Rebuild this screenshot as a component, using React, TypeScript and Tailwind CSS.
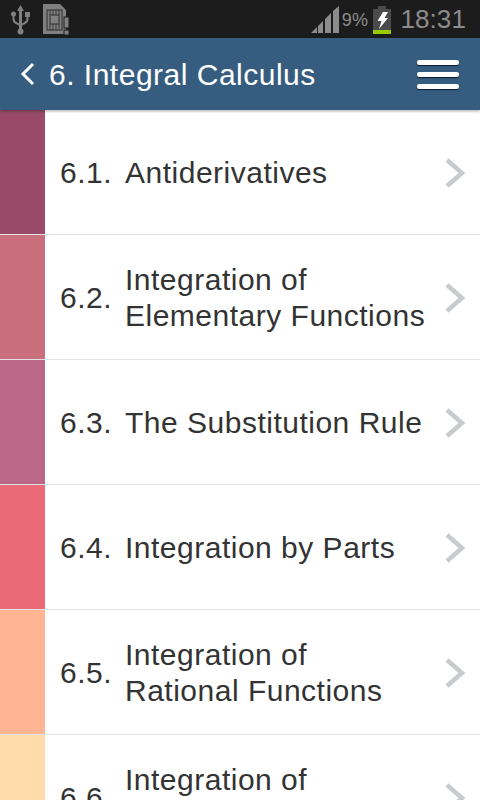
const sections = [
  { num: '6.1.', lines: ['Antiderivatives'], color: 'bg-[#9a4a68]' },
  { num: '6.2.', lines: ['Integration of', 'Elementary Functions'], color: 'bg-[#c96e7c]' },
  { num: '6.3.', lines: ['The Substitution Rule'], color: 'bg-[#bb6787]' },
  { num: '6.4.', lines: ['Integration by Parts'], color: 'bg-[#ea6a78]' },
  { num: '6.5.', lines: ['Integration of', 'Rational Functions'], color: 'bg-[#ffb592]' },
  { num: '6.6.', lines: ['Integration of', '\u00a0'], color: 'bg-[#ffdcaa]' },
]

function StatusBar() {
  return (
    <div className="h-[38px] bg-[#1c1c1c] flex items-center justify-between pl-[11px] pr-[14px] shrink-0">
      <div className="flex items-center gap-[13px]">
        {/* usb */}
        <svg width="19" height="31" viewBox="0 0 19 31" fill="none">
          <path d="M9.5 1 L13 7 H11 V25 H8 V7 H6 Z" fill="#808080" />
          <circle cx="9.5" cy="27.5" r="3" fill="#808080" />
          <path d="M2.5 11 V15 Q2.5 18 6 19.5 L9.5 21.5 L13 19.5 Q16.5 18 16.5 15 V11" stroke="#808080" strokeWidth="2" />
          <circle cx="2.5" cy="10" r="2.5" fill="#808080" />
          <rect x="14" y="8" width="5" height="5" fill="#808080" />
        </svg>
        {/* sd card warning */}
        <svg width="27" height="31" viewBox="0 0 27 31">
          <path d="M0 0 H17 L23 6 V30 H0 Z" fill="#808080" />
          <rect x="4" y="6" width="15" height="20" fill="none" stroke="#3a3a3a" strokeWidth="1.2" />
          <rect x="7" y="11" width="9" height="9" fill="none" stroke="#3a3a3a" strokeWidth="1.2" />
          <path d="M7 6 V11 M10 6 V11 M13 6 V11 M16 6 V11 M7 20 V26 M10 20 V26 M13 20 V26 M16 20 V26" stroke="#3a3a3a" strokeWidth="1" />
          <rect x="21" y="13" width="5" height="11" fill="#808080" stroke="#1c1c1c" />
          <rect x="21" y="26" width="5" height="5" fill="#808080" stroke="#1c1c1c" />
        </svg>
      </div>
      <div className="flex items-center">
        <svg width="29" height="28" viewBox="0 0 29 28" className="mt-[1px]">
          <path d="M0 27 L6 21 V27 Z M7 20 L12 15 V27 H7 Z M14 13 L20 7 V27 H14 Z M22 5 L28 0 V27 H22 Z" fill="#8c8c8c" />
        </svg>
        <span className="ml-[2px] mt-[1px] text-[18px] leading-none text-[#8c8c8c] font-['Liberation_Sans',sans-serif] tracking-[0.3px]">9%</span>
        <svg width="18" height="28" viewBox="0 0 18 28" className="ml-[5px] mt-[1px]">
          <rect x="5" y="0" width="8" height="3" fill="#4a4a4a" />
          <rect x="0" y="3" width="18" height="21" fill="#4a4a4a" />
          <rect x="0" y="24" width="18" height="4" fill="#99cc00" />
          <path d="M10 6 H15 L11.5 12 H15 L6 23 L8.5 15 H4.5 Z" fill="#ffffff" />
        </svg>
        <span className="ml-[9px] text-[26px] leading-none text-[#8c8c8c] font-['Liberation_Sans',sans-serif] tracking-[0.1px]">18:31</span>
      </div>
    </div>
  )
}

function Header() {
  return (
    <div className="relative z-10 h-[72px] bg-[#365d80] shadow-[0_1px_3px_rgba(0,0,0,0.35)] flex items-center justify-between pl-[20px] pr-[20px] shrink-0">
      <div className="flex items-center">
        <svg width="15" height="24" viewBox="0 0 15 24" fill="none">
          <path d="M13 2 L3 12 L13 22" stroke="#ffffff" strokeWidth="3" />
        </svg>
        <span className="ml-[14px] pt-[1px] text-[30px] leading-none tracking-[0.5px] text-white font-['Liberation_Sans',sans-serif]">6. Integral Calculus</span>
      </div>
      <div className="flex flex-col gap-[7px] mr-[1px]">
        <div className="w-[42px] h-[5px] bg-white rounded-[2px] shadow-[0_1px_1px_#0b1a28]" />
        <div className="w-[42px] h-[5px] bg-white rounded-[2px] shadow-[0_1px_1px_#0b1a28]" />
        <div className="w-[42px] h-[5px] bg-white rounded-[2px] shadow-[0_1px_1px_#0b1a28]" />
      </div>
    </div>
  )
}

function Row({ num, lines, color }: { num: string; lines: string[]; color: string }) {
  return (
    <div className="h-[125px] shrink-0 flex bg-white border-b border-[#e3e3e3]">
      <div className={`w-[45px] ${color}`} />
      <div className="flex-1 flex items-center pl-[15px] pr-[14px] pt-[1px] text-[30px] leading-[36px] tracking-[0.5px] text-[#333333] font-['Liberation_Sans',sans-serif]">
        <span className="w-[65px]">{num}</span>
        <div className="flex-1 whitespace-nowrap">
          {lines.map((line, i) => (
            <div key={i}>{line}</div>
          ))}
        </div>
        <svg width="21" height="32" viewBox="0 0 21 32" fill="none">
          <path d="M2 3 L17 16 L2 29" stroke="#c8cbce" strokeWidth="4.5" />
        </svg>
      </div>
    </div>
  )
}

export default function App() {
  return (
    <div className="w-[480px] h-[800px] overflow-hidden flex flex-col bg-white">
      <StatusBar />
      <Header />
      {sections.map((s) => (
        <Row key={s.num} {...s} />
      ))}
    </div>
  )
}
